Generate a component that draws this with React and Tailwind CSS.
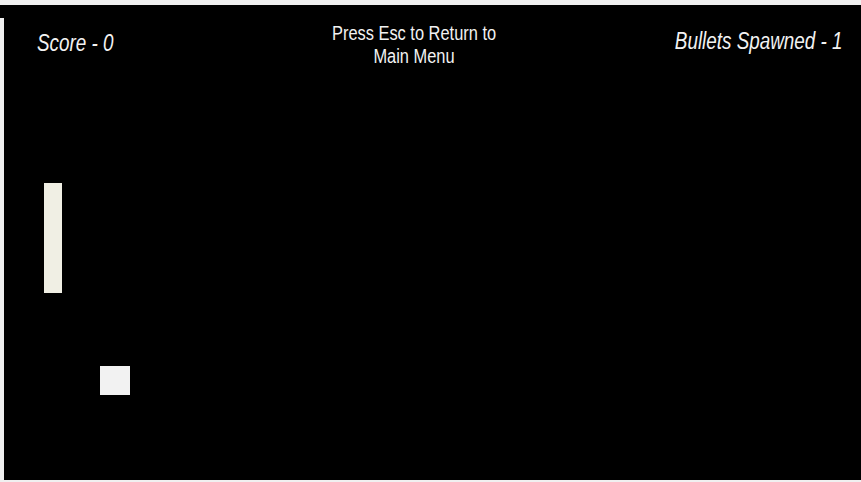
export default function App() {
    const font = { fontFamily: '"Liberation Sans", Arial, sans-serif' };

    return (
        <div className="w-[861px] h-[482px] flex flex-col bg-black overflow-hidden" style={font}>
            {/* window top edge */}
            <div className="h-[5px] bg-[#f0f0f0]" />

            <div className="flex-1 flex">
                {/* left edge */}
                <div className="w-[4px] flex flex-col">
                    <div className="h-[13px] bg-black" />
                    <div className="flex-1 bg-[#f0f0f0]" />
                </div>

                {/* game canvas */}
                <div className="flex-1 relative bg-black text-[#f2f2f2]">
                    <div className="flex items-start pr-[18px] pl-[33px]">
                        <div className="w-[277px] mt-[27px]">
                            <div className="inline-block origin-left scale-x-[0.82] whitespace-nowrap text-[23px] leading-[23px] italic">
                                Score - 0
                            </div>
                        </div>
                        <div className="w-[200px] mt-[17px] origin-center scale-x-[0.82] whitespace-nowrap text-center text-[20px] leading-[23px]">
                            Press Esc to Return to
                            <br />
                            Main Menu
                        </div>
                        <div className="flex-1 mt-[25px] text-right">
                            <div className="inline-block origin-right scale-x-[0.82] whitespace-nowrap text-[23px] leading-[23px] italic">
                                Bullets Spawned - 1
                            </div>
                        </div>
                    </div>

                    {/* paddle */}
                    <div className="absolute left-[40px] top-[178px] w-[18px] h-[110px] bg-[#f0efe4]" />
                    {/* bullet */}
                    <div className="absolute left-[96px] top-[361px] w-[30px] h-[29px] bg-[#f2f2f2]" />
                </div>
            </div>

            {/* bottom edge */}
            <div className="h-[2px] bg-[#f0f0f0]" />
        </div>
    );
}
